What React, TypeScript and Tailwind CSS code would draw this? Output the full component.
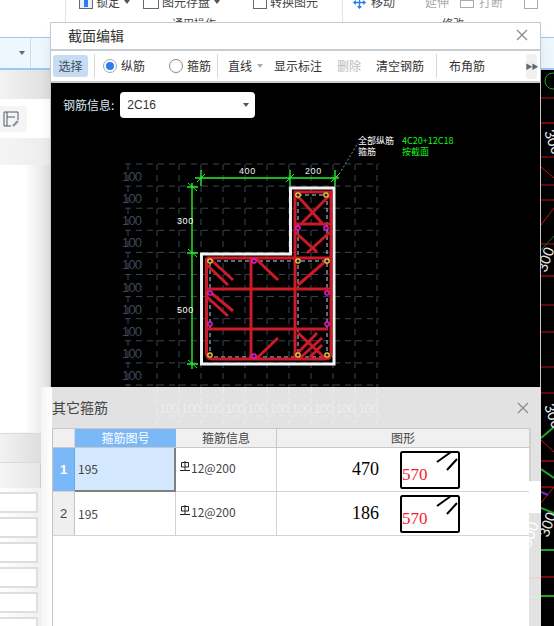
import React from "react";

const cjk = '"Noto Sans CJK SC","Liberation Sans",sans-serif';
const range = (n: number, start: number, step: number) => Array.from({ length: n }, (_, i) => start + i * step);

function Caret({ color = "#555" }: { color?: string }) {
  return <span className="inline-block w-0 h-0 border-x-[3px] border-x-transparent border-t-[4px]" style={{ borderTopColor: color }} />;
}

function Close({ color = "#8a8a8a" }: { color?: string }) {
  return (
    <svg width="12" height="12" viewBox="0 0 12 12" className="shrink-0">
      <path d="M1 1 L11 11 M11 1 L1 11" stroke={color} strokeWidth="1.2" fill="none" />
    </svg>
  );
}

function Radio({ on, label }: { on?: boolean; label: string }) {
  return (
    <div className="flex items-center gap-[4px] whitespace-nowrap">
      <span className={"w-[14px] h-[14px] rounded-full border flex items-center justify-center bg-white " + (on ? "border-[#9ab]" : "border-[#888]")}>
        {on && <span className="w-[8px] h-[8px] rounded-full bg-[#2b7de9]" />}
      </span>
      <span>{label}</span>
    </div>
  );
}

function Ribbon() {
  return (
    <div className="h-[38px] bg-white flex overflow-hidden text-[12px] text-[#444] border-b border-[#9cc8f2] whitespace-nowrap">
      <div className="w-[66px] border-r border-[#e3e3e3]" />
      <div className="w-[277px] border-r border-[#e3e3e3] leading-[14px]">
        <div className="flex items-center -mt-[5px] pl-[13px]">
          <span className="w-[14px] h-[14px] border border-[#667] mr-[3px] bg-[#e8f1fb]"><span className="block w-[4px] h-[8px] bg-[#2b7de9] mx-auto mt-[3px]" /></span>
          <span>锁定</span>
          <span className="ml-[4px] flex"><Caret /></span>
          <span className="ml-[13px] w-[16px] h-[14px] border border-[#667] mr-[3px]" />
          <span>图元存盘</span>
          <span className="ml-[4px] flex"><Caret /></span>
          <span className="ml-[33px] w-[14px] h-[14px] border border-[#667] mr-[3px]" />
          <span>转换图元</span>
        </div>
        <div className="pl-[106px] mt-[7px] text-[11px]">通用操作</div>
      </div>
      <div className="flex-1 leading-[14px]">
        <div className="flex items-center -mt-[5px] pl-[10px]">
          <span className="w-[13px] h-[13px] mr-[5px]">
            <svg viewBox="0 0 14 14" width="13" height="13"><path d="M7 1 V13 M1 7 H13 M5 3 L7 1 L9 3 M5 11 L7 13 L9 11 M3 5 L1 7 L3 9 M11 5 L13 7 L11 9" stroke="#2b7de9" strokeWidth="1.4" fill="none" /></svg>
          </span>
          <span>移动</span>
          <span className="ml-[11px] w-[14px] h-[14px] border-t border-dashed border-[#aaa] mr-[5px]" />
          <span className="text-[#aaa]">延伸</span>
          <span className="ml-[11px] w-[14px] h-[8px] border border-[#aaa] mr-[5px] mt-[4px]" />
          <span className="text-[#aaa]">打断</span>
          <span className="ml-[21px] w-[14px] h-[14px] border border-[#aaa]" />
        </div>
        <div className="pl-[99px] mt-[7px] text-[11px]">修改</div>
      </div>
    </div>
  );
}

function LeftPanel() {
  return (
    <div className="w-[554px] flex flex-col" style={{ height: 588 }}>
      <div className="h-[32px] shrink-0 bg-[#eef7fd] border-b-2 border-[#9cc8f2] flex items-stretch">
        <div className="w-[31px] border-r border-[#c9dcea] flex items-center justify-end pr-[5px]"><Caret color="#666" /></div>
      </div>
      <div className="h-[29px] shrink-0 bg-gradient-to-r from-[#f3f3f3] to-[#dfdfdf] w-[50px]" />
      <div className="h-[39px] shrink-0 w-[50px] bg-white flex items-center">
        <div className="w-[27px] h-[26px] bg-[#f5f5f5] rounded-r-[4px] flex items-center justify-end pl-[3px] pr-[8px]">
          <svg width="16" height="16" viewBox="0 0 16 16" className="shrink-0">
            <path d="M9 1 H1 V15 H8 M15 9 V1 H9 M4 1 V6 H12 M4 6 V15" stroke="#55596b" strokeWidth="1" fill="none" />
            <path d="M10 15 L15 10" stroke="#8b93ad" strokeWidth="2.4" />
          </svg>
        </div>
      </div>
      <div className="h-[27px] shrink-0 w-[50px] bg-gradient-to-r from-[#f5f5f5] to-[#ececec]" />
      <div className="h-[267px] shrink-0 w-[50px] bg-gradient-to-r from-white via-white to-[#e2e2e2]" />
      <div className="w-[41px] flex-1 flex flex-col overflow-hidden bg-gradient-to-r from-white to-[#f0f0f0]">
        <div className="h-[30px] shrink-0 mt-[1px] bg-gradient-to-r from-[#f2f2f2] to-[#dedede] border-y border-[#dadada]" />
        <div className="h-[25px] shrink-0 bg-gradient-to-r from-[#f5f5f5] to-[#e6e6e6] border-r border-[#cfcfcf]" />
        {range(6, 0, 1).map((i) => (
          <div key={i} className="h-[21px] shrink-0 mt-[4px] first:mt-[2px] mr-[3px] border-2 border-l-0 border-[#dedede] bg-white" />
        ))}
      </div>
    </div>
  );
}

const REDS = [
  "M206.5 258 H331 M206.5 258 V353 Q206.5 359 212 359 H325 Q331 359 331 353 V192 H295 V359",
  "M206 289 H331 M208 329 H328 M295 224 H331 M251 258 V359",
  "M208 257 L233 280 M207 265 L228 285 M210 292 L233 311 M207 297 L228 316 M255 258 L278 280 M298 285 L327 260 M257 358 L278 338",
  "M298 333 L325 358 M300 358 L322 338 M310 357 L322 345 M294 357 L317 333",
  "M295 193 L322 223 M330 195 L302 223 M295 232 L317 252 M330 232 L307 253",
];

const MAGENTA = [[210, 293], [254, 261], [327, 293], [210, 324], [327, 324], [254, 356], [298, 228], [326, 228]];
const YELLOW = [[210, 261], [298, 261], [327, 261], [210, 355], [298, 355], [327, 355], [298, 195], [326, 195]];

function Section() {
  return (
    <svg width="489" height="305" viewBox="51 83 489 305" className="block" style={{ fontFamily: '"Liberation Sans",sans-serif' }}>
      {range(11, 164, 22.1).map((y) => (
        <path key={y} d={`M125 ${y} H379`} stroke="#3c4454" strokeDasharray="6 5" />
      ))}
      {range(11, 157, 22).concat(128).map((x) => (
        <path key={x} d={`M${x} 164 V388`} stroke="#3c4454" strokeDasharray="6 5" />
      ))}
      {range(10, 181, 22.1).map((y) => (
        <text key={y} x="122" y={y} fontSize="13" fill="#3f4757" textLength="20">100</text>
      ))}
      <path d="M195 178 H339 M192 183 V369 M201 170 V186 M290 170 V186 M335 170 V186 M187 187 H198 M187 253 H198 M187 364 H198" stroke="#22f02a" strokeWidth="1.4" fill="none" />
      <path d="M197 182 L205 174 M286 182 L294 174 M331 182 L339 174 M188 183 L197 191 M188 249 L197 257 M188 360 L197 368" stroke="#22f02a" strokeWidth="1" fill="none" />
      <text x="239" y="174" fontSize="9" fill="#e8eef5" letterSpacing="0.6">400</text>
      <text x="305" y="174" fontSize="9" fill="#e8eef5" letterSpacing="0.6">200</text>
      <text x="177" y="224" fontSize="9" fill="#fff" letterSpacing="0.6">300</text>
      <text x="177" y="313" fontSize="9" fill="#fff" letterSpacing="0.6">500</text>
      <path d="M335 181 L358 143" stroke="#8a8a8a" strokeDasharray="2 2" />
      <g fontFamily={cjk} fontSize="9">
        <text x="358" y="144" fill="#fff">全部纵筋</text>
        <text x="358" y="155" fill="#fff">箍筋</text>
        <text x="402" y="144" fill="#19f01f">4C20+12C18</text>
        <text x="402" y="155" fill="#19f01f">按截面</text>
      </g>
      <path d="M201.5 364 V254 H290.5 V188 H334 V364 Z" fill="none" stroke="#f2f2f2" strokeWidth="3" />
      <path d="M210 261 H327 V357 H210 Z M298 195 H327 V261 M298 195 V357" fill="none" stroke="#bcd8f5" strokeDasharray="4 3" />
      {REDS.map((d, i) => (
        <path key={i} d={d} fill="none" stroke="#cc1a28" strokeWidth="3" />
      ))}
      {MAGENTA.map(([x, y]) => (
        <circle key={`${x}-${y}`} cx={x} cy={y} r="2.2" fill="#3a0a3a" stroke="#f020e0" strokeWidth="1.2" />
      ))}
      {YELLOW.map(([x, y]) => (
        <circle key={`${x}-${y}`} cx={x} cy={y} r="2.2" fill="#222" stroke="#f5d840" strokeWidth="1.2" />
      ))}
    </svg>
  );
}

function Dialog1() {
  return (
    <div className="absolute left-[50px] top-[22px] w-[491px] h-[380px] bg-white border border-[#c4c8cc] shadow-lg flex flex-col" style={{ fontFamily: cjk }}>
      <div className="h-[26px] shrink-0 flex items-center justify-between pl-[17px] pr-[12px] pb-[2px] text-[14px] text-[#333]">
        <span>截面编辑</span>
        <Close />
      </div>
      <div className="h-[34px] shrink-0 border-y-2 border-[#c8cdd2] flex items-center text-[12px] text-[#333] pl-[2px] whitespace-nowrap">
        <span className="w-[35px] h-[22px] bg-[#c5dcf2] rounded-[3px] flex items-center justify-center text-[#3a4a5a]">选择</span>
        <span className="w-px h-[24px] bg-[#d8d8d8] ml-[6px] mr-[8px]" />
        <Radio on label="纵筋" />
        <span className="w-[24px]" />
        <Radio label="箍筋" />
        <span className="w-px h-[24px] bg-[#d8d8d8] ml-[6px] mr-[10px]" />
        <span>直线</span>
        <span className="ml-[5px] mr-[11px] flex"><Caret color="#aaa" /></span>
        <span>显示标注</span>
        <span className="ml-[15px] text-[#bbb]">删除</span>
        <span className="ml-[15px]">清空钢筋</span>
        <span className="w-px h-[24px] bg-[#d8d8d8] ml-[12px] mr-[12px]" />
        <span>布角筋</span>
        <span className="ml-[41px] w-[11px] h-[25px] bg-[#f0f0f0] rounded-[3px] flex items-center justify-center text-[7px] text-[#666] tracking-[-1px]">▶▶</span>
      </div>
      <div className="flex-1 bg-black relative">
        <div className="flex items-center h-[44px] pl-[12px] mb-[-44px] relative text-[12px] text-[#d9e6f2]">
          <span>钢筋信息:</span>
          <div className="ml-[6px] w-[135px] h-[26px] bg-white rounded-[4px] flex items-center justify-between pl-[7px] pr-[6px] text-[#333]">
            <span style={{ fontFamily: '"Liberation Sans",sans-serif' }}>2C16</span>
            <Caret />
          </div>
        </div>
        <Section />
      </div>
    </div>
  );
}

function RebarMark() {
  return (
    <svg width="10" height="11" viewBox="0 0 10 11" className="inline-block mr-[1px] -mt-[4px]">
      <path d="M1.5 1.5 H8.5 V6 H1.5 Z M5 0 V9.5 M0 9.5 H10" stroke="#222" strokeWidth="1" fill="none" />
    </svg>
  );
}

function Shape() {
  return (
    <svg width="60" height="38" viewBox="0 0 60 38" className="block">
      <rect x="1" y="1" width="58" height="36" rx="1.5" fill="#fff" stroke="#000" strokeWidth="2" />
      <path d="M37 11 L51 1 M47 19 L57 8" stroke="#000" strokeWidth="2" fill="none" />
      <text x="2" y="29" fontSize="17" fill="#f5222d" fontFamily='"Liberation Serif",serif'>570</text>
    </svg>
  );
}

function Row({ n, val, selected }: { n: number; val: string; selected?: boolean }) {
  return (
    <div className="flex h-[44px] border-b border-[#d2d2d2]">
      <div className={"w-[22px] flex items-center justify-center text-[13px] border-r " + (selected ? "bg-[#7ab8f8] text-white font-bold border-[#6aa8e8]" : "bg-[#efefef] text-[#444] border-[#c4c4c4]")} style={{ fontFamily: '"Liberation Sans",sans-serif' }}>{n}</div>
      <div className={"w-[101px] flex items-center pl-[3px] text-[12px] text-[#444] " + (selected ? "bg-[#d4e8fd] border-r-2 border-b-2 border-[#7f7f7f] -mb-px" : "border-r border-[#d2d2d2]")}>195</div>
      <div className="w-[101px] flex items-center pl-[4px] pb-[3px] text-[12px] text-[#444] border-r border-[#d2d2d2]"><RebarMark />12@200</div>
      <div className="flex-1 flex items-center pl-[75px]">
        <span className="w-[48px] text-[18px] text-black" style={{ fontFamily: '"Liberation Serif",serif' }}>{val}</span>
        <Shape />
      </div>
    </div>
  );
}

function Dialog2() {
  return (
    <div className="absolute left-[41px] top-[387px] w-[500px] h-[239px] bg-[#e2e2e2] flex" style={{ fontFamily: cjk }}>
      <div className="w-[11px] h-full bg-gradient-to-r from-[#f4f4f4] to-white" />
      <div className="flex-1 flex flex-col">
        <div className="h-[41px] shrink-0 flex items-center justify-between text-[14px] text-[#444] relative pr-[12px] overflow-hidden">
          <svg width="489" height="41" viewBox="52 387 489 41" className="absolute left-0 top-0" style={{ fontFamily: '"Liberation Sans",sans-serif' }}>
            {range(11, 157, 22).map((x) => (
              <path key={x} d={`M${x} 387 V428`} stroke="#ececec" strokeDasharray="6 5" />
            ))}
            <path d="M157 416 H380" stroke="#ececec" strokeDasharray="6 5" />
            {range(10, 159, 22.1).map((x) => (
              <text key={x} x={x} y="413" fontSize="13" fill="#ededed" textLength="20">100</text>
            ))}
          </svg>
          <span className="relative">其它箍筋</span>
          <span className="relative"><Close /></span>
        </div>
        <div className="flex-1 flex">
          <div className="w-[477px] bg-white border-l border-[#c4c4c4] flex flex-col text-[12px]">
            <div className="flex h-[20px] border-y border-[#c8c8c8] bg-[#f0f0f0] text-[#444]">
              <div className="w-[22px] border-r border-[#d8d8d8]" />
              <div className="w-[101px] bg-[#7ab8f8] text-white flex items-center justify-center">箍筋图号</div>
              <div className="w-[101px] flex items-center justify-center border-r border-[#c8c8c8]">箍筋信息</div>
              <div className="flex-1 flex items-center justify-center">图形</div>
            </div>
            <Row n={1} val="470" selected />
            <Row n={2} val="186" />
          </div>
          <div className="flex-1 flex flex-col">
            <div className="h-[53px] border-l-2 border-[#d0d0d0]" />
            <div className="h-[32px] bg-white" />
            <div className="flex-1 relative overflow-hidden">
              <svg width="12" height="114" viewBox="0 0 12 114" className="block">
                <text transform="translate(1 36) rotate(-70)" fontSize="16" fill="#ffffff" fontFamily='"Liberation Sans",sans-serif'>300</text>
                <path d="M0 65 H12" stroke="#f0c8c8" />
                <path d="M0 84 H12" stroke="#d8f0d8" strokeWidth="2" />
              </svg>
            </div>
          </div>
        </div>
      </div>
    </div>
  );
}

function CadStrip() {
  return (
    <svg width="13" height="556" viewBox="541 70 13 556" className="absolute left-[541px] top-[70px] bg-black">
      <circle cx="553" cy="81" r="8" fill="none" stroke="#1fa62a" />
      <path d="M541 98 H554 M541 157 H554 M541 185 H554 M541 200 H554 M541 244 H554 M541 305 H554 M541 332 H554 M541 367 H554 M541 393 H554" stroke="#7a0f14" strokeWidth="1.5" />
      <path d="M541 123 H554 M541 276 H554 M541 461 H554 M541 487 H554 M541 577 H554" stroke="#e01616" strokeWidth="1" />
      <path d="M541 167 L554 178 M541 225 L554 208 M541 440 L554 452 M541 503 L554 487" stroke="#c81414" strokeWidth="1" />
      <path d="M541 438 L554 427 M541 469 L554 478 M541 508 L554 513 M541 550 H554 M541 596 H554" stroke="#1fa62a" strokeWidth="2" />
      <path d="M541 492 L548 495" stroke="#7a28d8" strokeWidth="2" />
      <path d="M541 250 L554 236" stroke="#1a7a22" strokeWidth="1" />
      <text transform="translate(544 132) rotate(70)" fontSize="15" fill="#e8e8e8" fontFamily='"Liberation Sans",sans-serif'>300</text>
      <text transform="translate(546 273) rotate(-70)" fontSize="15" fill="#e8e8e8" fontFamily='"Liberation Sans",sans-serif'>300</text>
      <text transform="translate(544 406) rotate(70)" fontSize="15" fill="#e8e8e8" fontFamily='"Liberation Sans",sans-serif'>300</text>
      <text transform="translate(548 538) rotate(-70)" fontSize="15" fill="#e8e8e8" fontFamily='"Liberation Sans",sans-serif'>300</text>
    </svg>
  );
}

export default function App() {
  return (
    <div className="relative w-[554px] h-[626px] overflow-hidden bg-white" style={{ fontFamily: cjk }}>
      <Ribbon />
      <LeftPanel />
      <CadStrip />
      <Dialog1 />
      <Dialog2 />
    </div>
  );
}
